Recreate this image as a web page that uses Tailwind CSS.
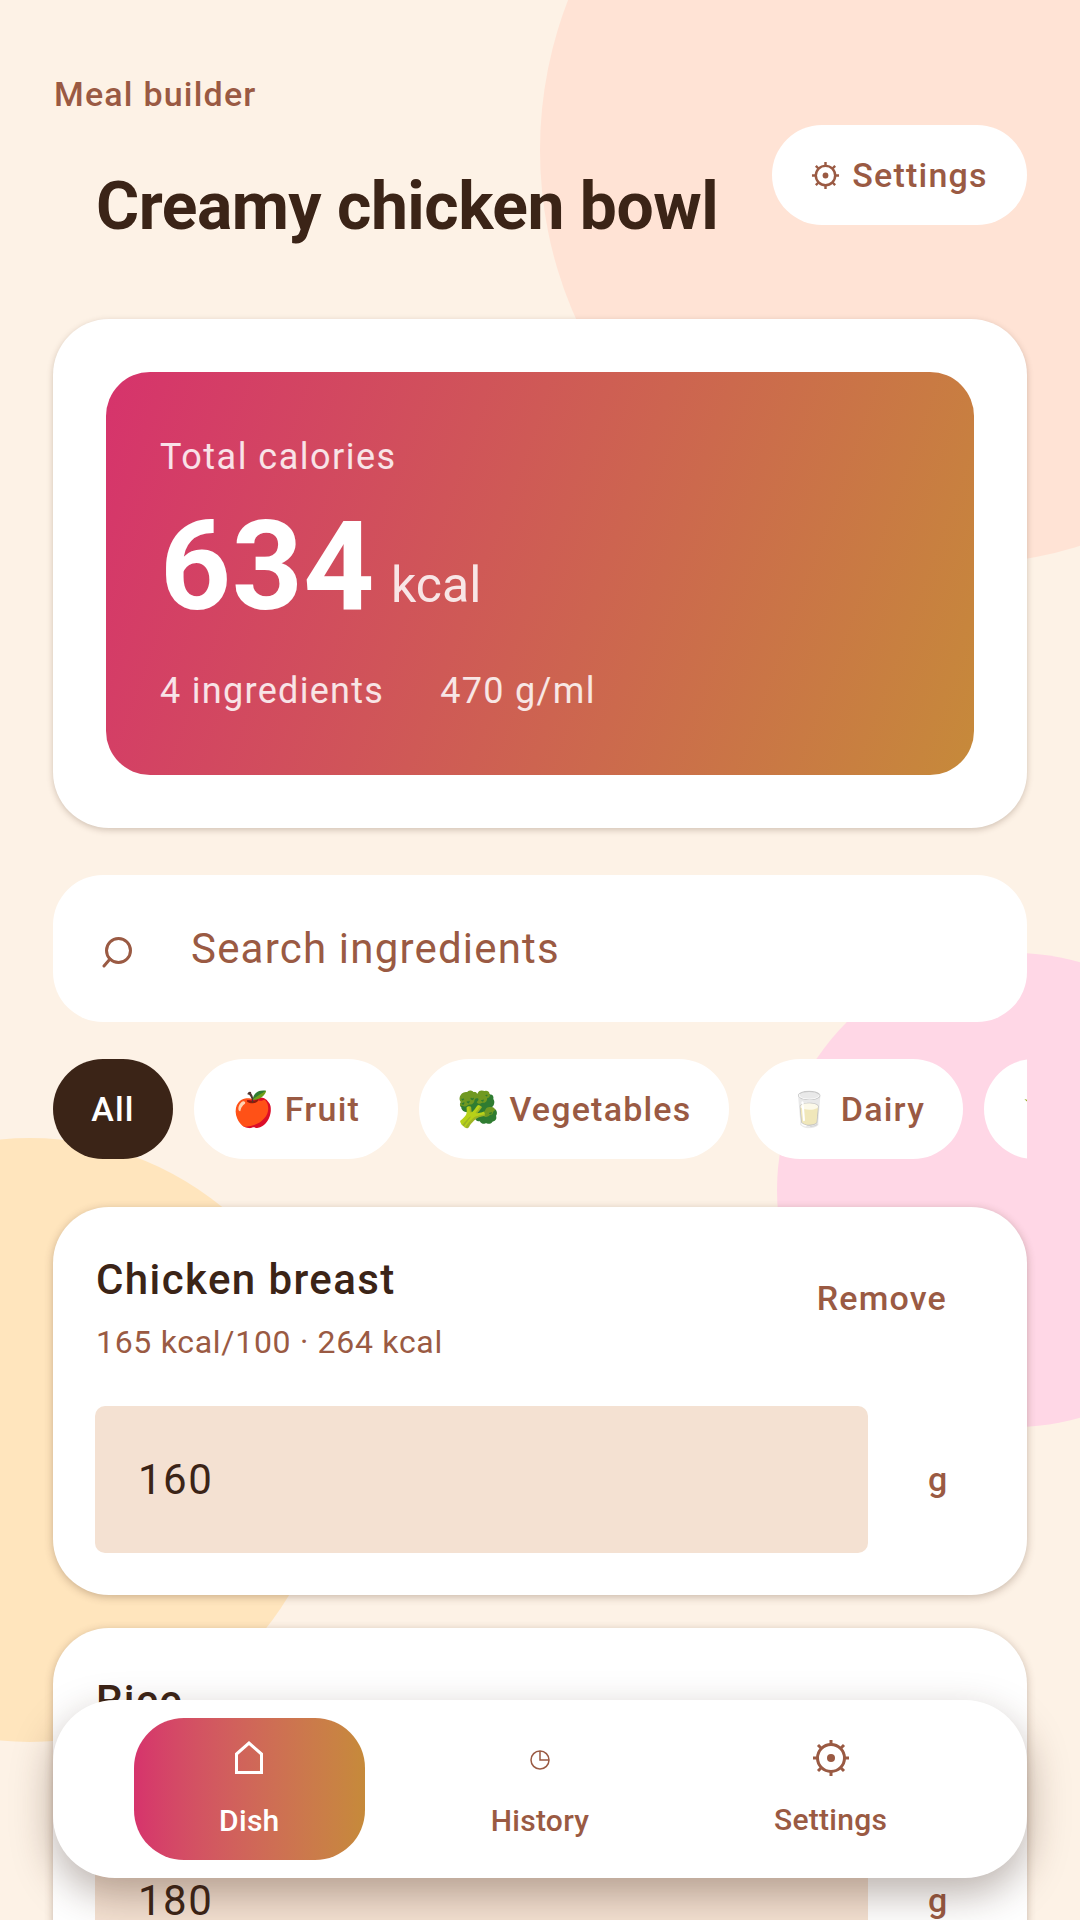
<!DOCTYPE html>
<html lang="en">
<head>
  <meta charset="UTF-8" />
  <title>Meal builder</title>
  <script src="https://cdn.jsdelivr.net/npm/@tailwindcss/browser@4"></script>
</head>
<body class="bg-[#fdf2e6] text-[#3b2417] font-['Roboto',sans-serif]">
  <div class="relative w-[1080px] h-[1920px] overflow-hidden">
    <!-- Background blobs -->
    <div class="absolute left-[540px] top-[-265px] w-[830px] h-[830px] rounded-full bg-[#ffe3d5]"></div>
    <div class="absolute left-[777px] top-[953px] w-[474px] h-[474px] rounded-full bg-[#ffd7e6]"></div>
    <div class="absolute left-[-272px] top-[1138px] w-[604px] h-[604px] rounded-full bg-[#ffe5bd]"></div>

    <div class="relative flex flex-col px-[53px]">
      <!-- Header -->
      <p class="mt-[72px] ml-px text-[34px] leading-[44px] font-medium tracking-[1.2px] text-[#9a5a43]">Meal builder</p>
      <div class="flex justify-between mt-[9px] h-[194px]">
        <h1 class="ml-[43px] mt-[46px] text-[66px] leading-[72px] font-bold tracking-[-0.5px]">Creamy chicken bowl</h1>
        <button class="h-[100px] w-[255px] rounded-full bg-white flex items-center justify-center gap-[12px] text-[34px] font-medium tracking-[1.2px] text-[#9a5a43]">
          <svg class="w-[29px] h-[29px]" viewBox="0 0 30 30" fill="none" stroke="currentColor" stroke-width="2.5"><circle cx="15" cy="15" r="10" /><circle cx="15" cy="15" r="3" fill="currentColor" stroke="none" /><path d="M15 1v4M15 25v4M1 15h4M25 15h4M5 5l3 3M22 22l3 3M25 5l-3 3M8 22l-3 3" /></svg>
          Settings
        </button>
      </div>

      <!-- Calories card -->
      <div class="bg-white rounded-[56px] p-[53px] shadow-[0_2px_6px_rgba(80,50,30,0.25)]">
        <div class="h-[403px] rounded-[44px] bg-linear-[110deg] from-[#d6336c] to-[#c68a3a] px-[54px] pt-[61px] text-white">
          <p class="text-[36px] leading-[48px] tracking-[1.5px] text-white/85">Total calories</p>
          <div class="flex items-end gap-[16px] mt-[16px]">
            <span class="text-[124px] leading-[140px] font-bold tracking-[0.5px]">634</span>
            <span class="mb-[24px] text-[50px] leading-[56px] text-white/85">kcal</span>
          </div>
          <div class="flex gap-[56px] mt-[30px] text-[36px] leading-[48px] tracking-[1.3px] text-white/85">
            <span>4 ingredients</span>
            <span>470 g/ml</span>
          </div>
        </div>
      </div>

      <!-- Search -->
      <div class="mt-[47px] h-[147px] rounded-[50px] bg-white flex items-center pl-[49px] text-[#9a5a43]">
        <svg class="mt-[8px] w-[31px] h-[31px]" viewBox="0 0 31 31" fill="none" stroke="currentColor" stroke-width="3" stroke-linecap="round"><circle cx="16.5" cy="13.5" r="12" /><path d="M8 22l-6 7" /></svg>
        <span class="ml-[58px] text-[42px] tracking-[1.2px]">Search ingredients</span>
      </div>

      <!-- Category chips -->
      <div class="mt-[37px] flex gap-[21px] overflow-hidden text-[34px] font-medium tracking-[1.2px] text-[#9a5a43]">
        <div class="shrink-0 h-[100px] w-[120px] rounded-full bg-[#3b2417] text-white flex items-center justify-center">All</div>
        <div class="shrink-0 h-[100px] w-[204px] rounded-full bg-white flex items-center justify-center">🍎 Fruit</div>
        <div class="shrink-0 h-[100px] w-[310px] rounded-full bg-white flex items-center justify-center">🥦 Vegetables</div>
        <div class="shrink-0 h-[100px] w-[213px] rounded-full bg-white flex items-center justify-center">🥛 Dairy</div>
        <div class="shrink-0 h-[100px] w-[213px] rounded-full bg-white flex items-center pl-[38px]">🌾 Grains</div>
      </div>

      <!-- Ingredient cards -->
      <div class="mt-[48px] h-[388px] bg-white rounded-[56px] px-[42px] pt-[49px] shadow-[0_2px_8px_rgba(80,50,30,0.3)]">
        <div class="flex justify-between">
          <div class="ml-px">
            <p class="text-[42px] leading-[48px] font-medium tracking-[1.4px]">Chicken breast</p>
            <p class="mt-[16px] text-[32px] leading-[44px] tracking-[0.7px] text-[#9a5a43]">165 kcal/100 · 264 kcal</p>
          </div>
          <span class="mt-[17px] mr-[38px] text-[34px] font-medium tracking-[1.2px] text-[#9a5a43]">Remove</span>
        </div>
        <div class="flex items-center mt-[42px]">
          <div class="w-[773px] h-[147px] rounded-[10px] bg-[#f4e1d2] flex items-center pl-[43px] text-[42px] tracking-[1.5px]">160</div>
          <span class="ml-[60px] text-[34px] font-medium text-[#9a5a43]">g</span>
        </div>
      </div>

      <div class="mt-[33px] h-[388px] bg-white rounded-[56px] px-[42px] pt-[49px] shadow-[0_2px_8px_rgba(80,50,30,0.3)]">
        <div class="flex justify-between">
          <div class="ml-px">
            <p class="text-[42px] leading-[48px] font-medium tracking-[1.4px]">Rice</p>
            <p class="mt-[16px] text-[32px] leading-[44px] tracking-[0.7px] text-[#9a5a43]">130 kcal/100 · 234 kcal</p>
          </div>
          <span class="mt-[17px] mr-[38px] text-[34px] font-medium tracking-[1.2px] text-[#9a5a43]">Remove</span>
        </div>
        <div class="flex items-center mt-[42px]">
          <div class="w-[773px] h-[147px] rounded-[10px] bg-[#f4e1d2] flex items-center pl-[43px] text-[42px] tracking-[1.5px]">180</div>
          <span class="ml-[60px] text-[34px] font-medium text-[#9a5a43]">g</span>
        </div>
      </div>
    </div>

    <!-- Bottom nav -->
    <nav class="absolute left-[53px] top-[1700px] w-[974px] h-[178px] rounded-[62px] bg-white shadow-[0_16px_40px_rgba(60,35,20,0.35)] px-[51px] grid grid-cols-3 items-center text-[#9a5a43] text-[30px] leading-[36px] font-medium tracking-[0.3px]">
      <div class="justify-self-center w-[231px] h-[142px] rounded-[50px] bg-linear-to-r from-[#d6336c] to-[#c68a3a] text-white flex flex-col items-center">
        <svg class="mt-[23px] w-[28px] h-[33px]" viewBox="0 0 28 33" fill="none" stroke="currentColor" stroke-width="3"><path d="M1.5 31.5V13L14 2l12.5 11v18.5z" /></svg>
        <span class="mt-[29px]">Dish</span>
      </div>
      <div class="justify-self-center w-[231px] h-[142px] flex flex-col items-center">
        <svg class="mt-[32px] w-[20px] h-[20px]" viewBox="0 0 20 20" fill="none" stroke="currentColor" stroke-width="1.5"><circle cx="10" cy="10" r="9" /><path d="M10 1v9h9" /></svg>
        <span class="mt-[33px]">History</span>
      </div>
      <div class="justify-self-center w-[231px] h-[142px] flex flex-col items-center">
        <svg class="mt-[21px] w-[38px] h-[38px]" viewBox="0 0 38 38" fill="none" stroke="currentColor" stroke-width="3"><circle cx="19" cy="19" r="13.5" /><circle cx="19" cy="19" r="4" fill="currentColor" stroke="none" /><path d="M19 1v5M19 32v5M1 19h5M32 19h5M6 6l4 4M28 28l4 4M32 6l-4 4M10 28l-4 4" /></svg>
        <span class="mt-[25px]">Settings</span>
      </div>
    </nav>
  </div>
</body>
</html>
